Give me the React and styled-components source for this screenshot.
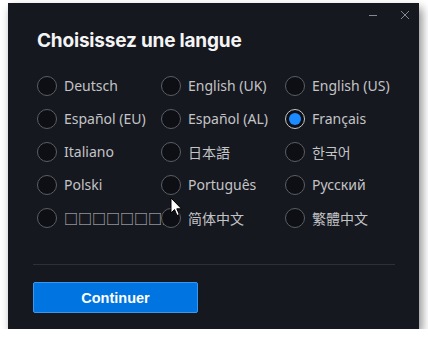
import React, {useState} from 'react'
import styled, {createGlobalStyle} from 'styled-components'

const GlobalStyle = createGlobalStyle`
    body {
        margin: 0;
        background: #ffffff;
    }
`

const Page = styled.div`
    padding: 3px 0 0 8px;
`

const Window = styled.div`
    position: relative;
    width: 411px;
    height: 326px;
    box-sizing: border-box;
    background: #16181f;
    box-shadow: 3px 5px 9px rgba(0, 0, 0, 0.45);
    padding: 0 24px 0 25px;
    display: flex;
    flex-direction: column;
`

const TitleBar = styled.div`
    height: 24px;
    display: flex;
    justify-content: flex-end;
    align-items: center;
    gap: 20px;
    margin-right: -16px;
`

const ControlBtn = styled.button`
    width: 12px;
    height: 12px;
    padding: 0;
    border: none;
    background: none;
    display: flex;
    align-items: center;
    justify-content: center;
    color: #858890;
`

const Title = styled.h1`
    margin: 2px 0 0 4px;
    font-family: Inter, "Noto Sans", sans-serif;
    font-weight: 700;
    font-size: 19px;
    line-height: 24px;
    color: #f4f4f5;
    letter-spacing: -0.2px;
`

const Grid = styled.div`
    margin: 16px 0 0 4px;
    display: grid;
    grid-template-columns: repeat(3, 124px);
    grid-auto-rows: 33px;
`

const Option = styled.label`
    display: flex;
    align-items: center;
    gap: 7px;
    min-width: 0;
    cursor: pointer;
`

const Circle = styled.span`
    flex: none;
    width: 20px;
    height: 20px;
    box-sizing: border-box;
    border-radius: 50%;
    border: 1.5px solid ${p => (p.$on ? '#c4c6ca' : '#5b5e64')};
    background: #0d0f14;
    display: flex;
    align-items: center;
    justify-content: center;
    position: relative;
    z-index: 1;
`

const Dot = styled.span`
    width: 12px;
    height: 12px;
    border-radius: 50%;
    background: #1b8cff;
`

const Label = styled.span`
    font-family: "Noto Sans", "Noto Sans CJK SC", "DejaVu Sans", sans-serif;
    font-size: 14px;
    color: #c3c4c7;
    white-space: nowrap;
    overflow: hidden;
    margin-right: ${p => (p.$clip ? '-4px' : '0')};
`

const Divider = styled.hr`
    margin: 30px 0 0 0;
    border: none;
    height: 1px;
    background: #2d3037;
`

const Button = styled.button`
    margin-top: 17px;
    width: 165px;
    height: 31px;
    box-sizing: border-box;
    border: 1px solid #3b98f2;
    border-radius: 2px;
    background: #0074e0;
    color: #ffffff;
    font-family: "Liberation Sans", Arial, sans-serif;
    font-weight: 700;
    font-size: 14.5px;
    cursor: pointer;
`

const Cursor = styled.svg`
    position: absolute;
    left: 162px;
    top: 194px;
    z-index: 2;
`

const languages = [
    'Deutsch', 'English (UK)', 'English (US)',
    'Español (EU)', 'Español (AL)', 'Français',
    'Italiano', '日本語', '한국어',
    'Polski', 'Português', 'Русский',
    '□□□□□□□□', '简体中文', '繁體中文',
]

const App = () => {
    const [lang, setLang] = useState('Français')

    return (
        <Page>
            <GlobalStyle />
            <Window>
                <TitleBar>
                    <ControlBtn aria-label="minimize">
                        <svg width="10" height="10" viewBox="0 0 10 10">
                            <line x1="1" y1="5.5" x2="9" y2="5.5" stroke="currentColor" strokeWidth="1" />
                        </svg>
                    </ControlBtn>
                    <ControlBtn aria-label="close">
                        <svg width="10" height="10" viewBox="0 0 10 10">
                            <path d="M1 1 L9 9 M9 1 L1 9" stroke="currentColor" strokeWidth="1" />
                        </svg>
                    </ControlBtn>
                </TitleBar>
                <Title>Choisissez une langue</Title>
                <Grid>
                    {languages.map(l => (
                        <Option key={l} onClick={() => setLang(l)}>
                            <Circle $on={lang === l}>{lang === l && <Dot />}</Circle>
                            <Label $clip={l.startsWith('□')}>{l}</Label>
                        </Option>
                    ))}
                </Grid>
                <Divider />
                <Button>Continuer</Button>
                <Cursor width="13" height="20" viewBox="0 0 13 20">
                    <path d="M1 1 L1 16 L4.5 12.5 L7 18.5 L9.3 17.5 L6.8 11.8 L11.5 11.8 Z" fill="#ffffff" stroke="#000000" strokeWidth="1" strokeLinejoin="round" />
                </Cursor>
            </Window>
        </Page>
    )
}

export default App
